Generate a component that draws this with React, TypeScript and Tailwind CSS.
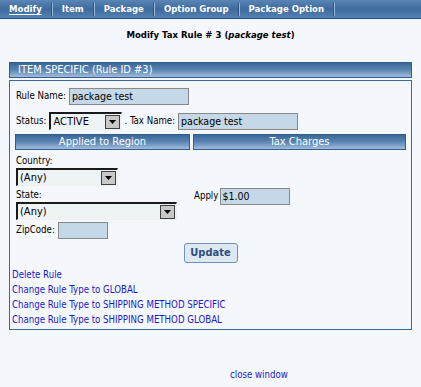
import React from 'react';

const tabs = ['Modify', 'Item', 'Package', 'Option Group', 'Package Option'];

const links = [
  'Delete Rule',
  'Change Rule Type to GLOBAL',
  'Change Rule Type to SHIPPING METHOD SPECIFIC',
  'Change Rule Type to SHIPPING METHOD GLOBAL',
];

const FakeSelect: React.FC<{ value: string; width: string }> = ({ value, width }) => (
  <div className={`flex h-[18px] ${width} items-center border-t-2 border-l-2 border-t-[#1a1a1a] border-l-[#1a1a1a] border-b border-r border-b-[#f0f0f0] border-r-[#f0f0f0] bg-[#eef3f6]`}>
    <span className="flex-1 truncate pl-[2px] text-[11px] leading-none">{value}</span>
    <span className="mr-[1px] flex h-[14px] w-[15px] items-center justify-center border border-[#404040] bg-[#c8c8c8]">
      <svg width="7" height="4" viewBox="0 0 7 4">
        <path d="M0 0h7L3.5 4z" fill="#000" />
      </svg>
    </span>
  </div>
);

const BarHeader: React.FC<{ children: React.ReactNode; className?: string }> = ({ children, className }) => (
  <div className={`flex h-[16px] items-center border border-[#2f5f92] bg-gradient-to-b from-[#3a6797] via-[#5c86b4] to-[#a3bcd7] text-white ${className ?? ''}`}>
    {children}
  </div>
);

export default function App() {
  return (
    <div className="min-h-[387px] bg-[#f4f7fb] font-['DejaVu_Sans_Condensed','DejaVu_Sans',sans-serif] text-[9.6px] text-black">
      {/* Tabs */}
      <div className="flex h-[19px] items-center border-b border-[#22507f] bg-gradient-to-b from-[#5a86b5] via-[#3e6b9d] to-[#5582b2]">
        {tabs.map((t, i) => (
          <div key={t} className="flex items-center">
            <span className={`px-[9px] text-[9.5px] font-bold text-white ${i === 0 ? 'underline underline-offset-2' : ''}`}>{t}</span>
            <span className="h-[13px] w-[2px] border-l border-r border-l-[#2a527f] border-r-[#9db9d6]" />
          </div>
        ))}
      </div>

      {/* Title */}
      <div className="pt-[9px] text-center text-[9.5px] font-bold leading-[13px]">
        Modify Tax Rule # 3 (<i>package test</i>)
      </div>

      {/* Section */}
      <div className="mx-[9px] mt-[21px]">
        <BarHeader className="pl-[8px] text-[11px]">ITEM SPECIFIC (Rule ID #3)</BarHeader>

        <div className="mt-[2px] h-[250px] border border-[#3a6a9c] px-[2px] pt-[7px]">
          <div className="flex items-center gap-[3px] pl-[4px]">
            <span>Rule Name:</span>
            <div className="h-[17px] w-[120px] border border-[#888] bg-[#c5d8e8] pl-[2px] text-[10.5px] leading-[15px]">package test</div>
          </div>

          <div className="mt-[7px] flex items-center pl-[4px]">
            <span className="mr-[3px]">Status:</span>
            <FakeSelect value="ACTIVE" width="w-[73px]" />
            <span className="ml-[2px] mr-[3px]">. Tax Name:</span>
            <div className="h-[17px] w-[120px] border border-[#888] bg-[#c5d8e8] pl-[2px] text-[10.5px] leading-[15px]">package test</div>
          </div>

          <div className="mt-[4px] grid grid-cols-[175px_213px] gap-x-[3px] pl-[3px]">
            <BarHeader className="justify-center text-[11px]">Applied to Region</BarHeader>
            <BarHeader className="justify-center text-[11px]">Tax Charges</BarHeader>

            <div className="pt-[4px] pl-[1px]">
              <div className="leading-[13px]">Country:</div>
              <div className="mt-[1px]">
                <FakeSelect value="(Any)" width="w-[102px]" />
              </div>
              <div className="mt-[2px] leading-[13px]">State:</div>
              <div className="mt-[1px]">
                <FakeSelect value="(Any)" width="w-[161px]" />
              </div>
              <div className="mt-[2px] flex items-center gap-[3px]">
                <span>ZipCode:</span>
                <div className="h-[17px] w-[50px] border border-[#888] bg-[#c5d8e8]" />
              </div>
            </div>

            <div className="flex items-center pl-[1px] pt-[4px]">
              <span className="mr-[2px]">Apply</span>
              <div className="h-[17px] w-[70px] border border-[#888] bg-[#c5d8e8] pl-[1px] text-[10.5px] leading-[15px]">$1.00</div>
            </div>
          </div>

          <div className="mt-[4px] flex justify-center">
            <button className="h-[20px] w-[54px] rounded-[3px] border border-[#6f92b8] bg-[#dde8f3] text-[11px] font-bold text-[#2d4f7d]">
              Update
            </button>
          </div>

          <div className="mt-[4px] flex flex-col">
            {links.map((l) => (
              <a key={l} href="#" className="leading-[15px] text-[#1a1acc]">
                {l}
              </a>
            ))}
          </div>
        </div>
      </div>

      <div className="mt-[38px] pl-[230px]">
        <a href="#" className="text-[#1a1acc]">close window</a>
      </div>
    </div>
  );
}
